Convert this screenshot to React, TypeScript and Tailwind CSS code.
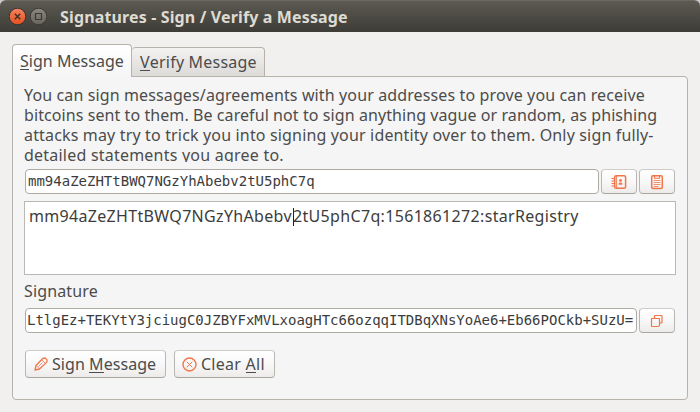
import type { ReactNode } from "react";

const buttonLook =
  "flex items-center rounded-[4px] border border-[#b9b6b2] border-t-[#cfccc8] border-b-[#a9a6a2] bg-linear-to-b from-white via-[#f9f8f8] to-[#edebea] text-[#4c4c4c]";

function IconButton({ label, children }: { label: string; children: ReactNode }) {
  return (
    <button aria-label={label} className={`${buttonLook} h-[25px] w-9 shrink-0 justify-center`}>
      <span className="text-[#f0764a]">{children}</span>
    </button>
  );
}

function Mnemonic({ children }: { children: ReactNode }) {
  return <span className="inline-block h-[19px] border-b border-[#4c4c4c] leading-[20px]">{children}</span>;
}

function AddressBookIcon() {
  return (
    <svg width="16" height="16" viewBox="0 0 16 16" fill="none" stroke="currentColor">
      <rect x="3.6" y="1.700" width="11" height="12.600" rx="1.6" strokeWidth="1.5" />
      <path d="M5.600 2v12" strokeWidth=".9" />
      <path d="M.5 4.500h4M.5 7h4M.5 9.500h4M.5 12h4" strokeWidth="1.200" />
      <circle cx="9.500" cy="6.500" r="1.400" fill="currentColor" stroke="none" />
      <path d="M7.700 10.800v-1.200q0-1.200 1.800-1.200t1.800 1.200v1.200z" fill="currentColor" stroke="none" />
    </svg>
  );
}

function ClipboardIcon() {
  return (
    <svg width="14" height="16" viewBox="0 0 14 16" fill="none" stroke="currentColor">
      <rect x="1.7" y="1.7" width="10.6" height="12.8" rx="1.2" strokeWidth="1.500" />
      <path d="M4.500 2v2.200h5V2" strokeWidth="1.100" />
      <path d="M3.500 6.500h7M3.500 8.500h7M3.500 10.500h7M3.500 12.500h5" strokeWidth=".8" />
    </svg>
  );
}

function CopyIcon() {
  return (
    <svg width="14" height="14" viewBox="0 0 14 14" fill="none" stroke="currentColor" strokeWidth="1.200" strokeLinejoin="round">
      <path d="M4.500 4.500V2q0-.5.5-.5h6.500q.5 0 .5.5v6.500q0 .5-.5.5H9.500" />
      <path d="M2 4.500h7q.5 0 .5.5v6q0 1.500-1.500 1.500H2q-.5 0-.5-.5V5q0-.5.5-.5z" />
    </svg>
  );
}

function PencilIcon() {
  return (
    <svg width="14" height="14" viewBox="0 0 14 14" fill="none" stroke="#f0764a" strokeWidth="1.300" strokeLinejoin="round">
      <path d="M1 13l1-4.500L8.500 1.800q2-1.600 3.700.1t.1 3.700L5.500 12z" />
      <path d="M2.200 8.500l3.200 3.300M7.700 2.700l3.600 3.600M4.500 9.500l4-4" strokeWidth=".8" />
    </svg>
  );
}

function ClearIcon() {
  return (
    <svg width="15" height="15" viewBox="0 0 15 15" fill="none" stroke="#f0764a">
      <circle cx="7.500" cy="7.500" r="6.500" strokeWidth="1.400" />
      <path d="M4.700 4.700l5.600 5.600m0-5.600l-5.600 5.600" strokeWidth="1" />
    </svg>
  );
}

function TitleBar() {
  return (
    <header className="flex h-8 items-center rounded-t-[6px] border-t border-[#6b6960] bg-linear-to-b from-[#5c5a51] to-[#3d3c37] pl-[9px]">
      <svg width="38" height="18" viewBox="0 0 38 18" fill="none" className="shrink-0">
        <defs>
          <linearGradient id="close" x2="0" y2="1">
            <stop stopColor="#f68360" />
            <stop offset="1" stopColor="#e2501f" />
          </linearGradient>
          <linearGradient id="max" x2="0" y2="1">
            <stop stopColor="#8b887e" />
            <stop offset="1" stopColor="#66645c" />
          </linearGradient>
        </defs>
        <circle cx="8.500" cy="8.500" r="8.300" fill="url(#close)" stroke="#35342f" />
        <path d="M5.800 5.800l5.400 5.400m0-5.400l-5.400 5.400" stroke="#46301f" strokeWidth="1.500" />
        <circle cx="29.500" cy="8.500" r="8.300" fill="url(#max)" stroke="#3b3a35" />
        <path d="M26.500 5.500h6v6h-6z" stroke="#3b3a35" strokeWidth="1.200" />
      </svg>
      <h1 className="ml-[13px] text-[16px] leading-5 font-bold tracking-[0.14px] whitespace-nowrap text-[#dfdbd2]">
        Signatures - Sign / Verify a Message
      </h1>
    </header>
  );
}

export default function App() {
  return (
    <div className="h-[412px] w-[700px] overflow-hidden bg-[#c9c9c9] font-['Noto_Sans',sans-serif] text-[16px] text-[#4c4c4c]">
      <TitleBar />
      <main className="flex h-[380px] flex-col bg-[#f1f0ee] px-3 pt-3">
        <nav className="relative z-10 -mb-px flex h-[33px] items-end whitespace-nowrap">
          <div className="h-[33px] w-[120px] rounded-t-[4px] border border-b-0 border-[#b7b2ac] bg-linear-to-b from-white to-[#f5f5f5] pt-[6px] pl-[7px] leading-5 tracking-[0.03px]">
            <Mnemonic>S</Mnemonic>ign Message
          </div>
          <div className="h-[30px] w-[133px] rounded-t-[4px] border border-l-0 border-[#b7b2ac] bg-linear-to-b from-[#f3f2f1] to-[#dddbd8] pt-[4px] pl-2 leading-5 tracking-[0.2px]">
            <Mnemonic>V</Mnemonic>erify Message
          </div>
        </nav>
        <section className="h-[324px] w-[676px] rounded-b-[4px] rounded-tr-[4px] border border-[#b7b2ac] bg-[#f5f5f5] pl-[11px]">
          <p className="mt-[8px] flex h-[77px] flex-col overflow-hidden leading-5 whitespace-nowrap">
            <span className="h-5 tracking-[0.125px]">You can sign messages/agreements with your addresses to prove you can receive</span>
            <span className="h-5 tracking-[0.08px]">bitcoins sent to them. Be careful not to sign anything vague or random, as phishing</span>
            <span className="h-5 tracking-[0.16px]">attacks may try to trick you into signing your identity over to them. Only sign fully-</span>
            <span className="h-5 tracking-[0.22px]">detailed statements you agree to.</span>
          </p>
          <div className="mt-[7px] ml-px flex gap-[2px]">
            <div className="h-[25px] w-[574px] rounded-[4px] border border-[#b0aaa4] bg-white pl-[2px] font-['DejaVu_Sans_Mono',monospace] text-[14px] leading-[23px] whitespace-nowrap text-[#3c3c3c]">
              mm94aZeZHTtBWQ7NGzYhAbebv2tU5phC7q
            </div>
            <IconButton label="Choose address"><AddressBookIcon /></IconButton>
            <IconButton label="Paste address"><ClipboardIcon /></IconButton>
          </div>
          <div className="mt-[7px] flex h-[74px] w-[652px] items-start border border-[#bbb7b2] bg-white pt-[4px] pl-1 leading-5 whitespace-nowrap text-[#3c3c3c]">
            <span className="w-[264px] tracking-[0.32px]">mm94aZeZHTtBWQ7NGzYhAbebv</span>
            <span className="mt-[2px] -mr-px h-[18px] w-px bg-[#222]" />
            <span className="tracking-[0.33px]">2tU5phC7q:1561861272:starRegistry</span>
          </div>
          <p className="mt-[6px] leading-5 tracking-[0.14px]">Signature</p>
          <div className="mt-[7px] ml-px flex gap-[2px]">
            <div className="h-[25px] w-[612px] overflow-hidden rounded-[4px] border border-[#b0aaa4] bg-white pl-px font-['DejaVu_Sans_Mono',monospace] text-[14px] leading-[23px] tracking-[-0.01px] whitespace-nowrap text-[#3c3c3c]">
              LtlgEz+TEKYtY3jciugC0JZBYFxMVLxoagHTc66ozqqITDBqXNsYoAe6+Eb66POCkb+SUzU=
            </div>
            <IconButton label="Copy signature"><CopyIcon /></IconButton>
          </div>
          <div className="mt-[17px] ml-px flex gap-2 whitespace-nowrap">
            <button className={`${buttonLook} h-7 w-[141px] gap-1 pl-2 tracking-[0.05px]`}>
              <PencilIcon />
              <span>Sign <Mnemonic>M</Mnemonic>essage</span>
            </button>
            <button className={`${buttonLook} h-7 w-[101px] gap-1 pl-[7px] tracking-[0.25px]`}>
              <ClearIcon />
              <span>Clear <Mnemonic>A</Mnemonic>ll</span>
            </button>
          </div>
        </section>
      </main>
    </div>
  );
}
